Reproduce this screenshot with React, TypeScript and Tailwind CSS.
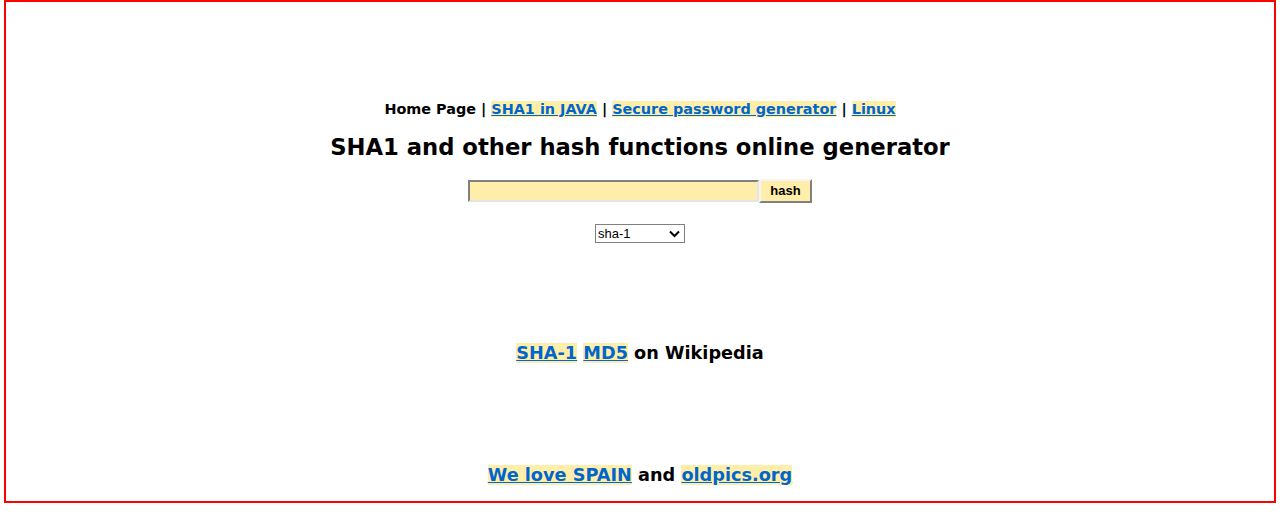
import React from 'react';

const linkCls = 'bg-[#ffeeaa] text-[#0066cc] underline';

export default function App() {
  return (
    <div className="w-[1280px] h-[527px] bg-white">
      <div
        className="ml-[4px] w-[1272px] h-[503px] border-2 border-[#ff0000] flex flex-col items-center text-black font-bold"
        style={{ fontFamily: '"DejaVu Sans", Verdana, sans-serif' }}
      >
        <div className="mt-[98px] text-[14.4px] leading-[19px]">
          Home Page |{' '}
          <a href="#" className={linkCls}>SHA1 in JAVA</a> |{' '}
          <a href="#" className={linkCls}>Secure password generator</a> |{' '}
          <a href="#" className={linkCls}>Linux</a>
        </div>
        <h1 className="mt-[13px] text-[22.7px] leading-[30px]">SHA1 and other hash functions online generator</h1>
        <div className="mt-[17px] flex items-center">
          <input
            type="text"
            className="w-[291px] h-[22px] bg-[#ffeeaa] border-2 border-t-[#808080] border-l-[#808080] border-r-[#e4e4e4] border-b-[#e4e4e4] outline-none"
          />
          <button
            type="button"
            className="w-[53px] h-[24px] bg-[#ffeeaa] border-2 border-t-[#f4f4f4] border-l-[#f4f4f4] border-r-[#808080] border-b-[#808080] text-[13px] font-bold"
            style={{ fontFamily: '"Liberation Sans", Arial, sans-serif' }}
          >
            hash
          </button>
        </div>
        <div className="mt-[21px]">
          <div
            className="w-[90px] h-[19px] border border-[#808080] flex items-center justify-between pl-[2px] pr-[4px] text-[13px] font-normal bg-white"
            style={{ fontFamily: '"Liberation Sans", Arial, sans-serif' }}
          >
            <span>sha-1</span>
            <svg width="11" height="8" viewBox="0 0 11 8">
              <path d="M1 1.5 L5.5 6 L10 1.5" stroke="#000" strokeWidth="2" fill="none" />
            </svg>
          </div>
        </div>
        <div className="mt-[98px] text-[17.7px] leading-[24px]">
          <a href="#" className={linkCls}>SHA-1</a>{' '}
          <a href="#" className={linkCls}>MD5</a> on Wikipedia
        </div>
        <div className="mt-[98px] text-[17.7px] leading-[24px]">
          <a href="#" className={linkCls}>We love SPAIN</a> and{' '}
          <a href="#" className={linkCls}>oldpics.org</a>
        </div>
      </div>
    </div>
  );
}
